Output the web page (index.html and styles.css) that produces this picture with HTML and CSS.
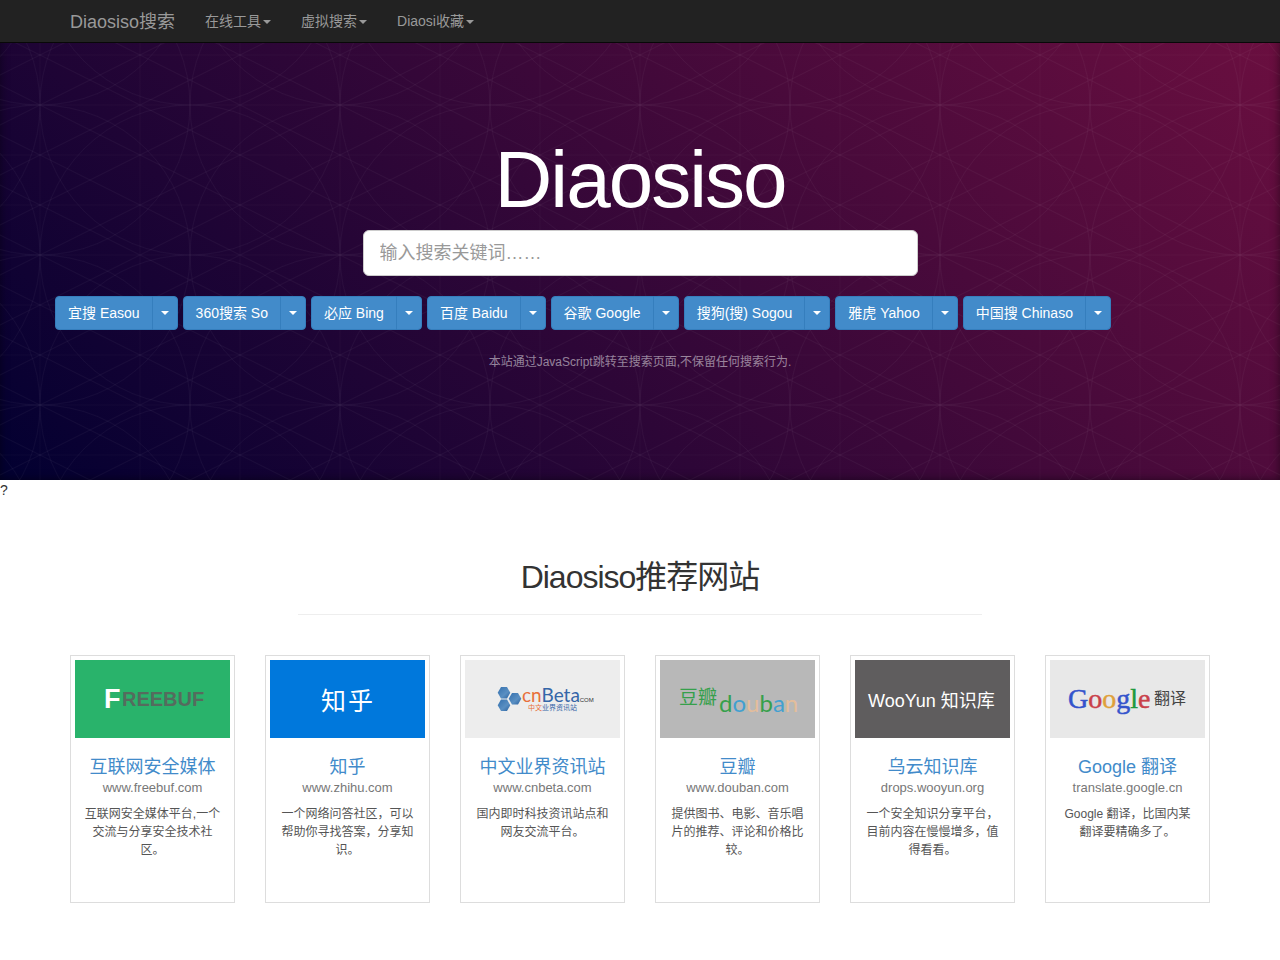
FILE: index.html
```html
<!DOCTYPE html>
<html lang="zh-CN">
<head>
<meta charset="utf-8">
<meta name="viewport" content="width=device-width, initial-scale=1">
<title>Diaosiso搜索</title>
<link rel="stylesheet" href="styles.css">
</head>
<body>
<header class="navbar">
  <nav class="container navbar-inner">
    <a class="brand" href="#">Diaosiso搜索</a>
    <button class="nav-item" type="button">在线工具<span class="caret"></span></button>
    <button class="nav-item" type="button">虚拟搜索<span class="caret"></span></button>
    <button class="nav-item" type="button">Diaosi收藏<span class="caret"></span></button>
  </nav>
</header>

<section class="masthead">
  <svg class="masthead-pattern" aria-hidden="true">
    <defs>
      <pattern id="weave" x="40" y="105" width="300" height="150" patternUnits="userSpaceOnUse">
        <g fill="none" stroke="#fff" stroke-opacity=".04">
          <path d="M0 0L300 150M0 50L200 150M0 100L100 150M100 0L300 100M200 0L300 50"/>
          <path d="M0 150L300 0M0 100L200 0M0 50L100 0M100 150L300 50M200 150L300 100"/>
          <g stroke-opacity=".036">
            <circle cx="0" cy="0" r="150"/><circle cx="150" cy="0" r="150"/><circle cx="300" cy="0" r="150"/>
            <circle cx="0" cy="150" r="150"/><circle cx="150" cy="150" r="150"/><circle cx="300" cy="150" r="150"/>
          </g>
          <path stroke-opacity=".02" d="M0 0V150M100 0V150M200 0V150M300 0V150M0 0H300M0 50H300M0 100H300M0 150H300"/>
        </g>
      </pattern>
    </defs>
    <rect width="100%" height="100%" fill="url(#weave)"/>
  </svg>
  <div class="container masthead-body">
    <h1 class="masthead-title">Diaosiso</h1>
    <input class="search-input" type="text" aria-label="搜索关键词" placeholder="输入搜索关键词……">
    <div class="engines">
      <div class="engine"><button class="btn" type="button">宜搜 Easou</button><button class="btn btn-toggle" type="button" aria-label="宜搜选项"><span class="caret"></span></button></div>
      <div class="engine"><button class="btn" type="button">360搜索 So</button><button class="btn btn-toggle" type="button" aria-label="360选项"><span class="caret"></span></button></div>
      <div class="engine"><button class="btn" type="button">必应 Bing</button><button class="btn btn-toggle" type="button" aria-label="必应选项"><span class="caret"></span></button></div>
      <div class="engine"><button class="btn" type="button">百度 Baidu</button><button class="btn btn-toggle" type="button" aria-label="百度选项"><span class="caret"></span></button></div>
      <div class="engine"><button class="btn" type="button">谷歌 Google</button><button class="btn btn-toggle" type="button" aria-label="谷歌选项"><span class="caret"></span></button></div>
      <div class="engine"><button class="btn" type="button">搜狗(搜) Sogou</button><button class="btn btn-toggle" type="button" aria-label="搜狗选项"><span class="caret"></span></button></div>
      <div class="engine"><button class="btn" type="button">雅虎 Yahoo</button><button class="btn btn-toggle" type="button" aria-label="雅虎选项"><span class="caret"></span></button></div>
      <div class="engine"><button class="btn" type="button">中国搜 Chinaso</button><button class="btn btn-toggle" type="button" aria-label="中国搜选项"><span class="caret"></span></button></div>
    </div>
    <p class="masthead-note">本站通过JavaScript跳转至搜索页面,不保留任何搜索行为.</p>
  </div>
</section>
<div>?</div>

<main class="container sites">
  <h2 class="sites-title">Diaosiso推荐网站</h2>
  <hr class="sites-rule">
  <div class="site-grid">
    <article class="card">
      <svg class="card-logo" viewBox="0 0 155 78" role="img" aria-label="FreeBuf">
        <rect width="155" height="78" fill="#29b36b"/>
        <text class="logo-sans logo-bold" x="29" y="48" font-size="27" fill="#fff">F</text>
        <text class="logo-sans logo-bold" x="47" y="46" font-size="20" fill="#556b5e">REEBUF</text>
      </svg>
      <div class="caption">
        <h3 class="card-title"><a href="#">互联网安全媒体</a></h3>
        <div class="card-url">www.freebuf.com</div>
        <p class="card-text">互联网安全媒体平台,一个交流与分享安全技术社区。</p>
      </div>
    </article>
    <article class="card">
      <svg class="card-logo" viewBox="0 0 155 78" role="img" aria-label="知乎">
        <rect width="155" height="78" fill="#0078dc"/>
        <text class="logo-sans" x="51" y="50" font-size="25" fill="#fff">知</text>
        <text class="logo-sans" x="78" y="50" font-size="25" fill="#fff">乎</text>
      </svg>
      <div class="caption">
        <h3 class="card-title"><a href="#">知乎</a></h3>
        <div class="card-url">www.zhihu.com</div>
        <p class="card-text">一个网络问答社区，可以帮助你寻找答案，分享知识。</p>
      </div>
    </article>
    <article class="card">
      <svg class="card-logo" viewBox="0 0 155 78" role="img" aria-label="cnBeta">
        <defs>
          <linearGradient id="hex" x1="0" y1="0" x2="1" y2="1"><stop stop-color="#3470ae"/><stop offset=".6" stop-color="#5a8fc2"/><stop offset="1" stop-color="#28609f"/></linearGradient>
        </defs>
        <rect width="155" height="78" fill="#ededed"/>
        <g fill="url(#hex)">
          <path d="M36 27h6l3.300 5.700-3.300 5.700h-6l-3.300-5.700z"/>
          <path d="M47 33h6l3.300 5.700-3.300 5.700h-6l-3.300-5.700z"/>
          <path d="M36 39.500h6l3.300 5.700-3.300 5.700h-6l-3.300-5.700z"/>
        </g>
        <text class="logo-humanist" x="57" y="42" font-size="19" fill="#e8703a">cn<tspan fill="#3566a8">Beta</tspan></text>
        <text class="logo-sans" x="113" y="42" font-size="6" fill="#333">.COM</text>
        <text class="logo-sans" x="63" y="50" font-size="7" fill="#e8703a">中文<tspan fill="#3566a8">业界资讯站</tspan></text>
      </svg>
      <div class="caption">
        <h3 class="card-title"><a href="#">中文业界资讯站</a></h3>
        <div class="card-url">www.cnbeta.com</div>
        <p class="card-text">国内即时科技资讯站点和网友交流平台。</p>
      </div>
    </article>
    <article class="card">
      <svg class="card-logo" viewBox="0 0 155 78" role="img" aria-label="豆瓣">
        <rect width="155" height="78" fill="#b8b8b8"/>
        <text class="logo-sans" x="19" y="44" font-size="19" fill="#36a04c">豆瓣</text>
        <text class="logo-humanist" x="59" y="52" font-size="24" fill="#36a04c">d<tspan fill="#42a0d0">o</tspan><tspan fill="#e3bd9b">u</tspan>b<tspan fill="#42a0d0">a</tspan><tspan fill="#e3bd9b">n</tspan></text>
      </svg>
      <div class="caption">
        <h3 class="card-title"><a href="#">豆瓣</a></h3>
        <div class="card-url">www.douban.com</div>
        <p class="card-text">提供图书、电影、音乐唱片的推荐、评论和价格比较。</p>
      </div>
    </article>
    <article class="card">
      <svg class="card-logo" viewBox="0 0 155 78" role="img" aria-label="WooYun 知识库">
        <rect width="155" height="78" fill="#5f5d5e"/>
        <text class="logo-sans" x="13" y="47" font-size="18" fill="#fff">WooYun 知识库</text>
      </svg>
      <div class="caption">
        <h3 class="card-title"><a href="#">乌云知识库</a></h3>
        <div class="card-url">drops.wooyun.org</div>
        <p class="card-text">一个安全知识分享平台，目前内容在慢慢增多，值得看看。</p>
      </div>
    </article>
    <article class="card">
      <svg class="card-logo" viewBox="0 0 155 78" role="img" aria-label="Google 翻译">
        <rect width="155" height="78" fill="#e8e8e8"/>
        <text class="logo-serif" x="18" y="48" font-size="28" stroke-width=".5" fill="#3454cc" stroke="#3454cc">G<tspan fill="#c9404a" stroke="#c9404a">o</tspan><tspan fill="#dfa03a" stroke="#dfa03a">o</tspan>g<tspan fill="#1d9a3c" stroke="#1d9a3c">l</tspan><tspan fill="#c9404a" stroke="#c9404a">e</tspan></text>
        <text class="logo-sans" x="104" y="44" font-size="16" fill="#444">翻译</text>
      </svg>
      <div class="caption">
        <h3 class="card-title"><a href="#">Google 翻译</a></h3>
        <div class="card-url">translate.google.cn</div>
        <p class="card-text">Google 翻译，比国内某翻译要精确多了。</p>
      </div>
    </article>
  </div>
</main>
</body>
</html>
```

FILE: styles.css
```css
* { box-sizing: border-box; }

body {
  margin: 0;
  font-family: "Liberation Sans", "Noto Sans CJK SC", sans-serif;
  font-size: 14px;
  line-height: 20px;
  color: #333;
  background: #fff;
}

button, input { font-family: inherit; }
a { text-decoration: none; }

.container {
  max-width: 1170px;
  margin: 0 auto;
  padding: 0 15px;
}

.caret {
  display: inline-block;
  border: 4px solid transparent;
  border-top-color: currentColor;
  border-bottom: 0;
  vertical-align: middle;
}

/* Top bar */
.navbar {
  position: fixed;
  top: 0;
  left: 0;
  right: 0;
  z-index: 10;
  background: #222;
  border-bottom: 1px solid #080808;
}
.navbar-inner { display: flex; align-items: center; }
.brand {
  padding: 11px 15px 9px 0;
  font-size: 18px;
  line-height: 22px;
  color: #999;
}
.nav-item {
  padding: 11px 15px;
  border: 0;
  background: none;
  font-size: 14px;
  line-height: 20px;
  color: #999;
}
.nav-item .caret { margin-left: 2px; }

/* Search area */
.masthead {
  position: relative;
  padding: 140px 0 108px;
  text-align: center;
  color: #fff;
  background: linear-gradient(45deg, #020031, #6d0f40);
  box-shadow: inset 0 0 10px rgba(0, 0, 0, .5);
}
.masthead-pattern {
  position: absolute;
  inset: 0;
  width: 100%;
  height: 100%;
}
.masthead-body { position: relative; }
.masthead-title {
  margin: 0 0 10px;
  font-size: 80px;
  font-weight: 400;
  line-height: 80px;
  letter-spacing: -2px;
}
.search-input {
  display: block;
  width: 100%;
  max-width: 555px;
  height: 46px;
  margin: 0 auto 20px;
  padding: 10px 16px;
  border: 1px solid #ccc;
  border-radius: 6px;
  background: #fff;
  font-size: 18px;
  color: #555;
}
.search-input::placeholder { color: #999; }
.engines {
  display: flex;
  flex-wrap: wrap;
  gap: 5px;
  margin: 0 -15px 20px;
}
.engine { display: flex; }
.btn {
  padding: 6px 12px;
  border: 1px solid #357ebd;
  border-radius: 4px 0 0 4px;
  background: #428bca;
  font-size: 14px;
  line-height: 20px;
  color: #fff;
}
.btn-toggle {
  margin-left: -1px;
  padding: 6px 8px;
  border-radius: 0 4px 4px 0;
}
.btn-toggle .caret { display: block; }
.masthead-note {
  margin: 0;
  padding-top: 2px;
  font-size: 12px;
  color: rgba(255, 255, 255, .5);
}

/* Recommended sites */
.sites { padding-bottom: 56px; }
.sites-title {
  margin: 60px 0 20px;
  font-size: 32px;
  font-weight: 400;
  line-height: 34px;
  letter-spacing: -1px;
  text-align: center;
}
.sites-rule {
  width: 60%;
  margin: 0 auto 40px;
  border: 0;
  border-top: 1px solid #eee;
}
.site-grid {
  display: grid;
  grid-template-columns: repeat(6, 1fr);
  gap: 30px;
}
.card {
  min-height: 248px;
  padding: 4px;
  border: 1px solid #ddd;
}
.card-logo { display: block; width: 100%; }
.caption { padding: 18px 9px 9px; text-align: center; }
.card-title {
  margin: 0;
  font-size: 18px;
  font-weight: 400;
  line-height: 22px;
}
.card-title a { color: #428bca; }
.card-url {
  margin-bottom: 7px;
  font-size: 13px;
  line-height: 20px;
  color: #777;
}
.card-text {
  margin: 0;
  font-size: 12px;
  line-height: 18px;
  color: #555;
}
.logo-sans { font-family: "Liberation Sans", "Noto Sans CJK SC", sans-serif; }
.logo-bold { font-weight: 700; }
.logo-humanist { font-family: Lato, "Open Sans", sans-serif; }
.logo-serif { font-family: "Liberation Serif", serif; }

@media (max-width: 991px) {
  .site-grid { grid-template-columns: repeat(3, 1fr); }
}
```
